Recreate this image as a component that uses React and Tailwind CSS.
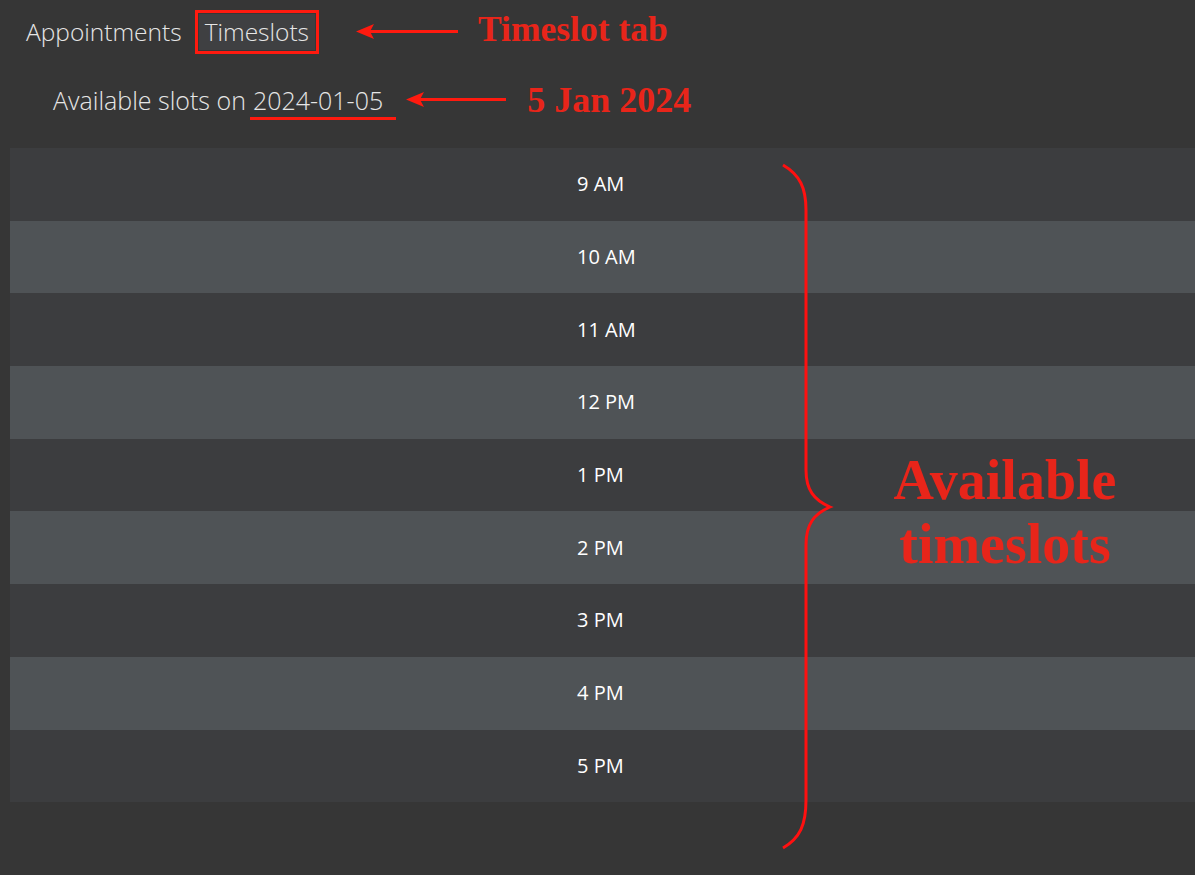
const slots = ["9 AM", "10 AM", "11 AM", "12 PM", "1 PM", "2 PM", "3 PM", "4 PM", "5 PM"];

const note = "font-bold text-[#e8251a] font-['Liberation_Serif',serif] whitespace-nowrap";

export default function App() {
  return (
    <div className="relative min-h-screen bg-[#363636] text-[#e8e8e8] font-['Open_Sans',sans-serif] overflow-hidden">
      {/* tabs */}
      <nav className="flex items-center gap-[17px] pl-[26px] pt-[12px] h-[52px]">
        <button className="text-[24.5px] leading-[36px] font-light text-[#e6e6e6]">Appointments</button>
        <button className="text-[24.5px] leading-[36px] font-light px-[6px] bg-[#3f4042] text-[#e6e6e6] outline-[3px] outline-[#ff1a0f] outline-offset-[1px]">
          Timeslots
        </button>
        <span className={`${note} ml-[146px] text-[35.5px] leading-[40px] -mt-[6px]`}>Timeslot tab</span>
      </nav>

      <div className="flex items-center pl-[53px] pt-[30px]">
        <h2 className="text-[25px] leading-[36px] font-light text-[#e6e6e6]">
          Available slots on
          <span className="inline-block ml-[4px] pl-[3px] pr-[13px] border-b-[3px] border-[#ff1a0f] leading-[34px]">2024-01-05</span>
        </h2>
        <span className={`${note} ml-[131px] text-[36px] leading-[40px] -mt-[2px]`}>5 Jan 2024</span>
      </div>

      <div className="ml-[10px] mt-[28px]">
        {slots.map((s, i) => (
          <div
            key={s}
            className={`h-[72.7px] flex items-center pl-[567px] text-[20px] text-white ${i % 2 ? "bg-[#4f5356]" : "bg-[#3c3d3f]"}`}
          >
            {s}
          </div>
        ))}
      </div>

      {/* arrows and brace drawn over the page */}
      <svg className="absolute left-0 top-0 pointer-events-none" width="1195" height="875">
        <g fill="#ff1a0f" stroke="none">
          <rect x="370" y="30" width="88" height="3" />
          <polygon points="356,31.5 374,24 370,31.5 374,39" />
          <rect x="420" y="98" width="86" height="3" />
          <polygon points="406,99.5 424,92 420,99.5 424,107" />
        </g>
        <path
          d="M783,165 C800,175 806,188 806,210 L806,470 C806,490 814,500 830,507 C814,514 806,524 806,545 L806,800 C806,825 800,838 783,848"
          fill="none"
          stroke="#ff1010"
          strokeWidth="3"
        />
      </svg>

      <div className={`${note} absolute left-[870px] top-[448px] w-[270px] text-center text-[56px] leading-[64px]`}>
        Available
        <br />
        timeslots
      </div>
    </div>
  );
}
